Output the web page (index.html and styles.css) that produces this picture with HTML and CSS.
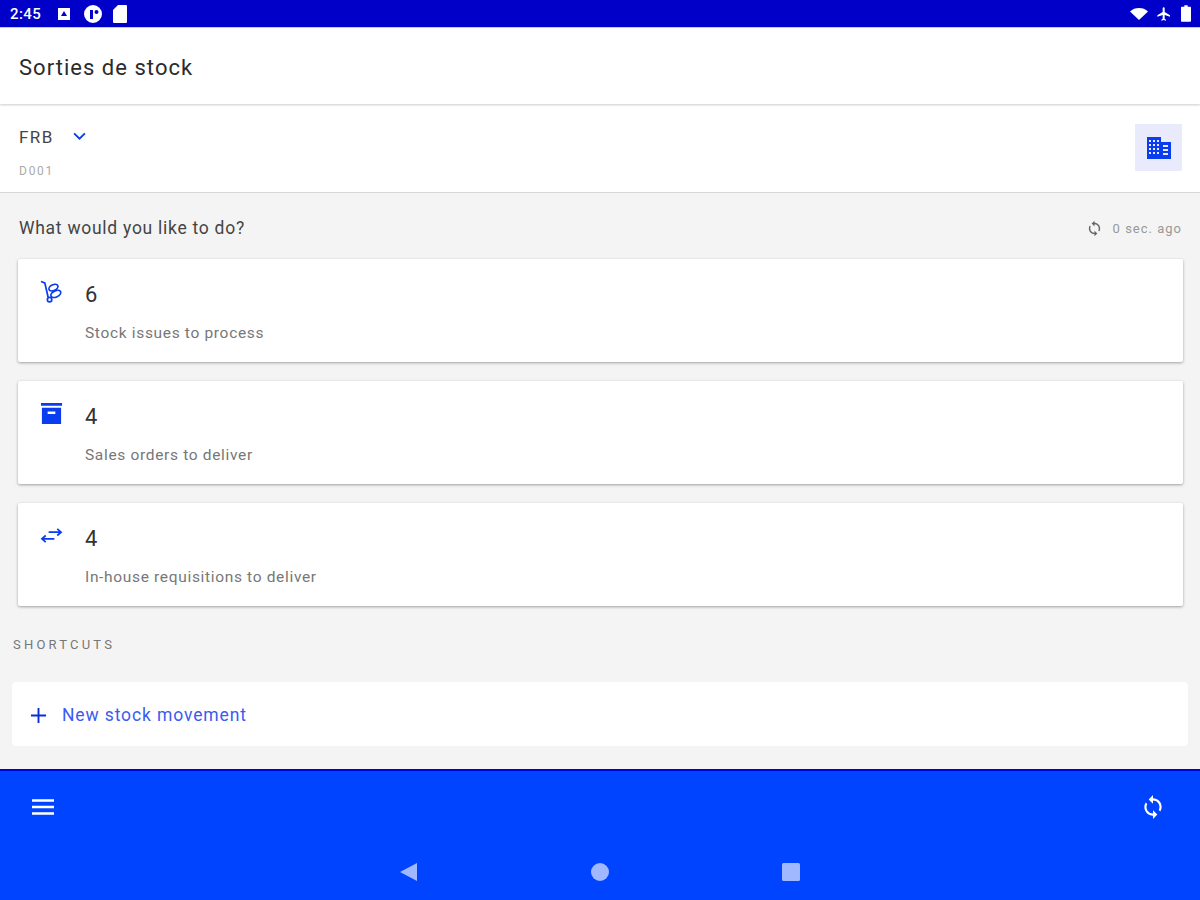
FILE: index.html
```html
<!DOCTYPE html>
<html>
<head>
<meta charset="utf-8" />
<title>Sorties de stock</title>
<link rel="stylesheet" href="styles.css">
</head>
<body>
<div class="screen">
  <div class="status">
    <div class="status-group">
      <span class="clock">2:45</span>
      <svg class="st-icon" viewBox="0 0 16 16"><path fill="#fff" fill-rule="evenodd" d="M2 2h12v12H2zM8 5l-3 5h6z"/></svg>
      <svg class="st-round" viewBox="0 0 20 20"><path fill="#fff" fill-rule="evenodd" d="M10 1a9 9 0 1 1 0 18a9 9 0 0 1 0-18zM7 6v9h3V6zM13.500 6a2 2 0 1 0 0 4a2 2 0 0 0 0-4z"/></svg>
      <svg class="st-card" viewBox="0 0 16 18"><path fill="#fff" d="M6 0h8a1 1 0 0 1 1 1v16a1 1 0 0 1-1 1H2a1 1 0 0 1-1-1V5z"/></svg>
    </div>
    <div class="status-group">
      <svg class="st-wifi" viewBox="0 0 18 14"><path fill="#fff" d="M9 13L0 4.500C2.500 2 5.500 1 9 1s6.500 1 9 3.500z"/></svg>
      <svg class="st-plane" viewBox="0 0 24 24"><path fill="#fff" d="M21 16v-2l-8-5V3.500a1.500 1.500 0 0 0-3 0V9l-8 5v2l8-2.500V19l-2 1.500V22l3.500-1 3.500 1v-1.500L13 19v-5.500z"/></svg>
      <svg class="st-batt" viewBox="0 0 12 20"><path fill="#fff" d="M4 0h4v2h3a1 1 0 0 1 1 1v16a1 1 0 0 1-1 1H1a1 1 0 0 1-1-1V3a1 1 0 0 1 1-1h3z"/></svg>
    </div>
  </div>

  <header class="title-bar"><h1>Sorties de stock</h1></header>

  <div class="site-row">
    <div class="site-info">
      <div class="site-name">
        <span>FRB</span>
        <svg class="chevron" viewBox="0 0 16 10"><path fill="none" stroke="#0a3be0" stroke-width="2" d="M2 1.500l6 6 6-6"/></svg>
      </div>
      <div class="site-code">D001</div>
    </div>
    <div class="site-btn">
      <svg viewBox="0 0 24 22" class="building"><path fill="#0b3df0" fill-rule="evenodd" d="M0 0h14v5h10v17H0zM2 3v2h2V3zM6 3v2h2V3zM10 3v2h2V3zM2 7v2h2V7zM6 7v2h2V7zM10 7v2h2V7zM2 11v2h2v-2zM6 11v2h2v-2zM10 11v2h2v-2zM2 15v2h2v-2zM6 15v2h2v-2zM10 15v2h2v-2zM16 8v2h5V8zM16 12v2h5v-2zM16 16v2h5v-2z"/></svg>
    </div>
  </div>

  <main class="content">
    <div class="question-row">
      <span class="question">What would you like to do?</span>
      <span class="sync-info">
        <svg class="sync-small" viewBox="0 0 24 24"><path fill="#666" d="M12 4V1L8 5l4 4V6c3.310 0 6 2.690 6 6 0 1.010-.25 1.970-.7 2.800l1.460 1.460A7.930 7.930 0 0 0 20 12c0-4.420-3.580-8-8-8zm0 14c-3.310 0-6-2.690-6-6 0-1.010.25-1.970.7-2.800L5.240 7.740A7.930 7.930 0 0 0 4 12c0 4.420 3.580 8 8 8v3l4-4-4-4z"/></svg>
        0 sec. ago
      </span>
    </div>

    <div class="cards">
      <div class="card">
        <svg class="card-icon" viewBox="0 0 24 24"><g fill="none" stroke="#0b3df0" stroke-width="1.800"><path d="M1 1.500l4 1.500 3.500 15"/><circle cx="10" cy="20.500" r="2.300"/><ellipse cx="14" cy="8" rx="5" ry="3" transform="rotate(-25 14 8)"/><ellipse cx="16.500" cy="14.500" rx="5.500" ry="3.200" transform="rotate(-25 16.500 14.500)"/></g></svg>
        <div>
          <div class="card-count">6</div>
          <div class="card-label">Stock issues to process</div>
        </div>
      </div>
      <div class="card">
        <svg class="card-icon" viewBox="0 0 24 24"><path fill="#0b3df0" fill-rule="evenodd" d="M1 1h22v3H1zM2 6h20v17H2zM8 10v2.500h8V10z"/></svg>
        <div>
          <div class="card-count">4</div>
          <div class="card-label">Sales orders to deliver</div>
        </div>
      </div>
      <div class="card">
        <svg class="card-icon" viewBox="0 0 24 24"><path fill="none" stroke="#0b3df0" stroke-width="1.800" d="M9 8.500h13M18 5l4 3.500-4 3.500M15 15.500H2M6 12l-4 3.500L6 19"/></svg>
        <div>
          <div class="card-count">4</div>
          <div class="card-label">In-house requisitions to deliver</div>
        </div>
      </div>
    </div>

    <div class="section-title">SHORTCUTS</div>

    <div class="shortcut">
      <svg class="plus" viewBox="0 0 18 18"><path fill="none" stroke="#0a2fd0" stroke-width="2" d="M9 1v16M1 9h16"/></svg>
      <span>New stock movement</span>
    </div>
  </main>

  <footer class="bottom">
    <div class="toolbar">
      <svg class="menu" viewBox="0 0 24 18"><path fill="none" stroke="#fff" stroke-width="2.400" d="M1 2.500h22M1 9h22M1 15.500h22"/></svg>
      <svg class="sync" viewBox="0 0 24 24"><path fill="#fff" d="M12 4V1L8 5l4 4V6c3.310 0 6 2.690 6 6 0 1.010-.25 1.970-.7 2.800l1.460 1.460A7.930 7.930 0 0 0 20 12c0-4.420-3.580-8-8-8zm0 14c-3.310 0-6-2.690-6-6 0-1.010.25-1.970.7-2.800L5.240 7.740A7.930 7.930 0 0 0 4 12c0 4.420 3.580 8 8 8v3l4-4-4-4z"/></svg>
    </div>
    <div class="nav">
      <svg class="nav-icon" viewBox="0 0 20 20"><path fill="#a0b8ff" d="M18 1v18L1 10z"/></svg>
      <svg class="nav-icon" viewBox="0 0 20 20"><circle cx="10" cy="10" r="9" fill="#a0b8ff"/></svg>
      <svg class="nav-icon" viewBox="0 0 20 20"><rect x="1" y="1" width="18" height="18" rx="1.500" fill="#a0b8ff"/></svg>
    </div>
  </footer>
</div>
</body>
</html>
```

FILE: styles.css
```css
* {
  box-sizing: border-box;
}
html, body {
  margin: 0;
  height: 100%;
}
body {
  font-family: Roboto, 'Liberation Sans', sans-serif;
  color: #333;
  background-color: #f4f4f4;
}
.screen {
  display: flex;
  flex-direction: column;
  height: 900px;
  overflow: hidden;
}

/* status bar */
.status {
  display: flex;
  justify-content: space-between;
  align-items: center;
  height: 28px;
  padding: 0 9px 0 10px;
  background-color: #0000c8;
  border-bottom: 1px solid #c8c8e8;
  color: #fff;
}
.status-group {
  display: flex;
  align-items: center;
}
.clock {
  width: 46px;
  font-size: 15px;
  font-weight: 500;
  letter-spacing: .4px;
}
.st-icon {
  width: 16px;
  height: 16px;
  margin-right: 11px;
}
.st-round {
  width: 20px;
  height: 20px;
  margin-right: 9px;
}
.st-card {
  width: 16px;
  height: 18px;
}
.st-wifi {
  width: 18px;
  height: 14px;
  margin-right: 8px;
}
.st-plane {
  width: 16px;
  height: 16px;
  margin-right: 9px;
}
.st-batt {
  width: 10px;
  height: 17px;
}

/* header */
.title-bar {
  display: flex;
  align-items: center;
  height: 76px;
  padding-left: 19px;
  padding-top: 2px;
  background-color: #fff;
  box-shadow: 0 1px 2px rgba(0, 0, 0, .12);
  position: relative;
}
h1 {
  margin: 0;
  font-size: 22px;
  font-weight: 400;
  letter-spacing: 1.030px;
  color: #2b2b2b;
}
.site-row {
  display: flex;
  justify-content: space-between;
  align-items: center;
  height: 87px;
  margin-top: 2px;
  padding: 0 18px 0 19px;
  background-color: #fff;
  border-bottom: 1px solid #d8d8d8;
}
.site-info {
  padding-top: 6px;
}
.site-name {
  display: flex;
  align-items: center;
  font-size: 17px;
  letter-spacing: 1.400px;
  color: #444;
}
.chevron {
  width: 15px;
  height: 9px;
  margin-left: 18px;
}
.site-code {
  margin-top: 17px;
  font-size: 12px;
  letter-spacing: 1.750px;
  color: #aaa;
}
.site-btn {
  display: flex;
  justify-content: center;
  align-items: center;
  width: 47px;
  height: 47px;
  margin-top: -4px;
  padding-top: 2px;
  background-color: #e9ebfd;
}
.building {
  width: 24px;
  height: 22px;
}

/* content */
.content {
  flex: 1;
  padding: 0 12px;
}
.question-row {
  display: flex;
  justify-content: space-between;
  align-items: center;
  height: 66px;
  padding: 18px 6px 14px 7px;
}
.question {
  font-size: 17.500px;
  letter-spacing: .73px;
  color: #444;
}
.sync-info {
  display: flex;
  align-items: center;
  font-size: 13px;
  letter-spacing: 1px;
  color: #999;
}
.sync-small {
  width: 17px;
  height: 17px;
  margin-right: 10px;
}
.cards {
  display: flex;
  flex-direction: column;
  gap: 19px;
  padding: 0 5px 0 6px;
}
.card {
  display: flex;
  height: 103px;
  padding: 21px 0 0 22px;
  background-color: #fff;
  border-radius: 2px;
  box-shadow: 0 1px 3px rgba(0, 0, 0, .35);
}
.card-icon {
  width: 23px;
  height: 23px;
  margin-right: 22px;
}
.card-count {
  height: 30px;
  font-size: 22px;
  line-height: 30px;
  color: #333;
}
.card-label {
  margin-top: 14px;
  font-size: 15.500px;
  letter-spacing: .67px;
  color: #777;
}
.section-title {
  margin-top: 31px;
  padding-left: 1px;
  font-size: 13px;
  line-height: 16px;
  letter-spacing: 3.200px;
  color: #777;
}
.shortcut {
  display: flex;
  align-items: center;
  height: 64px;
  margin-top: 29px;
  padding-left: 18px;
  padding-top: 2px;
  background-color: #fff;
  border-radius: 4px;
  font-size: 17.500px;
  letter-spacing: .88px;
  color: #3a5cf0;
}
.plus {
  width: 17px;
  height: 17px;
  margin-right: 15px;
}

/* bottom bar */
.bottom {
  height: 131px;
  background-color: #0044ff;
  border-top: 2px solid #0000d8;
}
.toolbar {
  display: flex;
  justify-content: space-between;
  align-items: center;
  height: 72px;
  padding: 0 34px 0 31px;
}
.menu {
  width: 24px;
  height: 18px;
}
.sync {
  width: 26px;
  height: 26px;
}
.nav {
  display: flex;
  justify-content: center;
  gap: 171px;
  padding-top: 19px;
}
.nav-icon {
  width: 20px;
  height: 20px;
}
```
